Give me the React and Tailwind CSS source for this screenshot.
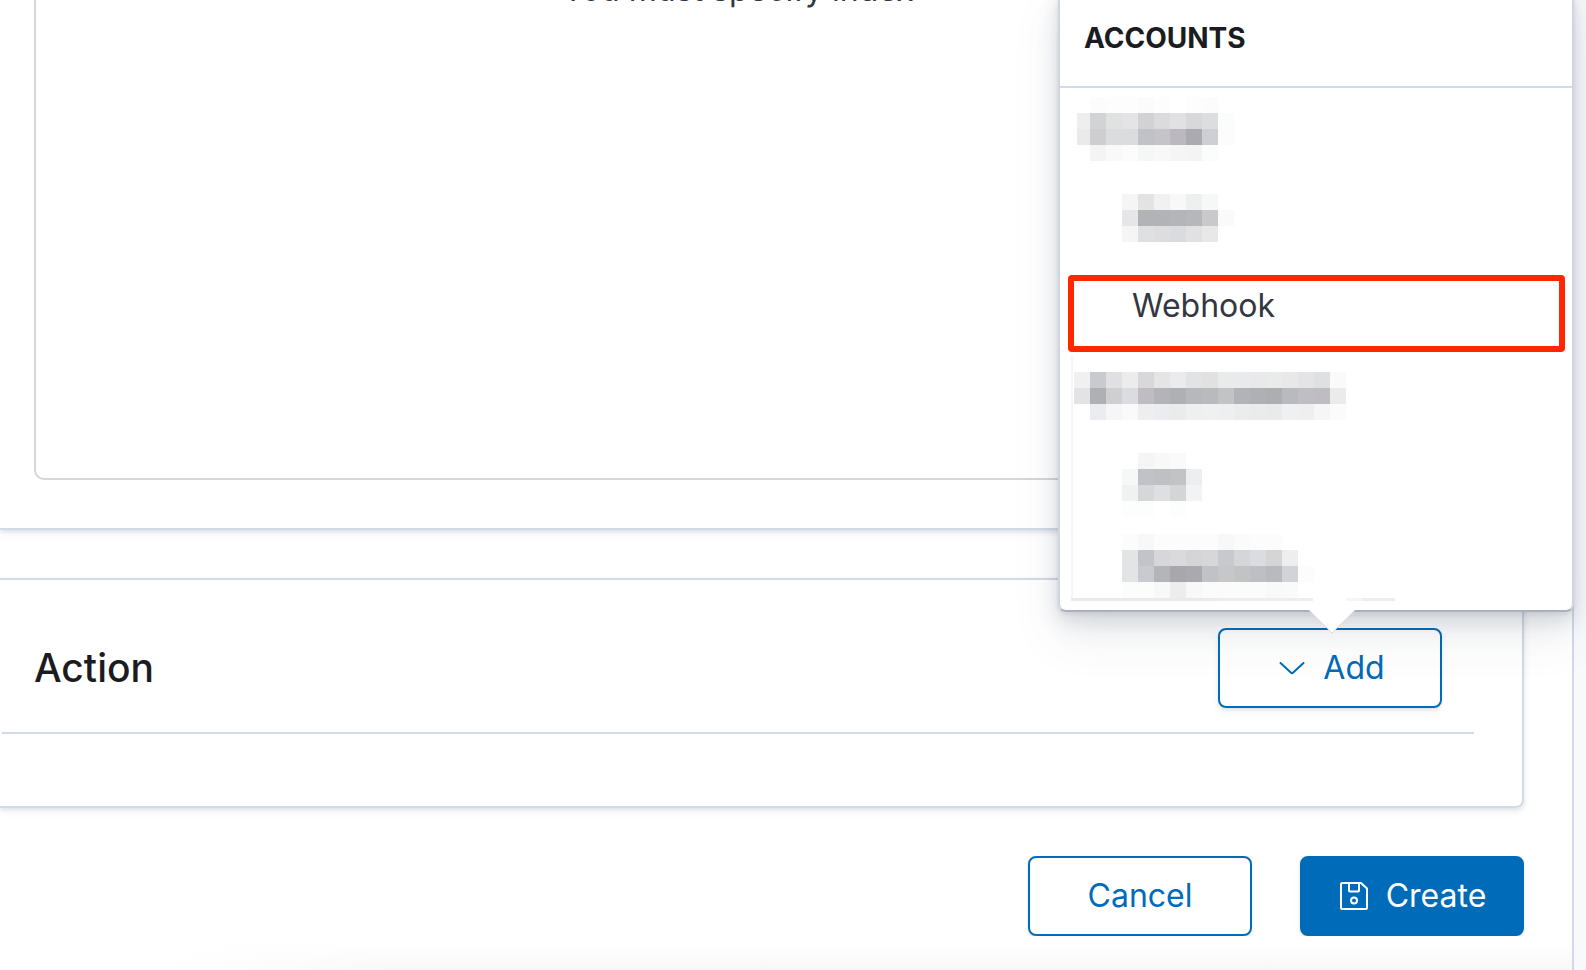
import React from "react";

const CELL = 16;

// Each block is a pixelated label: x / y of its first cell, then rows of grey tones.
const ROWS = [
  {
    id: "group-1",
    blocks: [
      {
        x: 14,
        y: 9,
        tones: [
          ["", "#fcfcfc", "#fdfdfd", "#fdfdfd", "#fbfbfb", "#fdfdfd", "", "#fdfdfd", "#fcfcfc"],
          ["#eeeeee", "#d2d3d5", "#dfe2e0", "#e4e4e7", "#d2d2d4", "#dbdbde", "#e1e1e4", "#d8d8da", "#dcdddf", "#fafdfc"],
          ["#eaeaea", "#cecdd0", "#dbdcde", "#dbdcde", "#c1c2c7", "#c4c4c9", "#bbb9bf", "#aaaab0", "#cecfd4", "#fcfcfc"],
          ["", "#f4f4f4", "#f9f9f9", "#fcfcfc", "#f5f7f7", "#f8f8f8", "#f5f5f5", "#f4f4f4", "#fafdfc"],
        ],
      },
    ],
  },
  {
    id: "item-1",
    blocks: [
      {
        x: 62,
        y: 19,
        tones: [
          ["#f5f5f5", "#e3e3e3", "#f1f1f1", "#f8f8f8", "#eef0f0", "#f6f7f7"],
          ["#e6e6e9", "#b2b3b7", "#b2b3b7", "#b4b5b9", "#b6b7ba", "#c9c9cb", "#fafafa"],
          ["#f5f5f5", "#dee0e2", "#dddddf", "#dadbde", "#e1e1e4", "#e8e8e8"],
        ],
      },
    ],
  },
  { id: "webhook", label: "Webhook" },
  {
    id: "group-2",
    edge: true,
    blocks: [
      {
        x: 14,
        y: 23,
        tones: [
          ["#f0f0f0", "#c9cacf", "#e0e0e3", "#ececec", "#d8d8da", "#e5e5e5", "#ebebed", "#e1e3e5", "#e1e1e1", "#e9ebea", "#e9eaec", "#e9e9eb", "#e9eaea", "#e8e8e8", "#e4e4e7", "#dee0e2", "#fafafa"],
          ["#e1e3e5", "#afb0b4", "#cfcfd1", "#dbdce1", "#bfbdc3", "#b3b4b9", "#afb0b4", "#b7b8bc", "#b9babe", "#c2c3c4", "#b2b3b9", "#afb0b5", "#adaeb2", "#b9bac0", "#c0bec5", "#bfbdc3", "#ebebeb"],
          ["", "#ebecef", "#f6f6f6", "#fafafa", "#eeeeee", "#ebecef", "#ebebeb", "#efefef", "#f0f0f0", "#eef0ef", "#ececec", "#ebebeb", "#eaeaea", "#f0f0f3", "#efefef", "#f6f6f6", "#fbfbfb"],
        ],
      },
    ],
  },
  {
    id: "item-2",
    edge: true,
    blocks: [
      {
        x: 62,
        y: 17,
        tones: [
          ["", "#f5f5f5", "#f8f8f8", "#fafafa"],
          ["#f6f7f7", "#c1c2c7", "#bfc0c4", "#c2c3c4", "#edeef0"],
          ["#eff2f1", "#d6d7d9", "#dfdfe2", "#d4d5d7", "#f3f3f3"],
          ["#fdfdfd", "#fdfdfd", "", "#fdfdfd"],
        ],
      },
    ],
  },
  {
    id: "item-3",
    edge: true,
    foot: true,
    blocks: [
      {
        x: 62,
        y: 11,
        tones: [
          ["#fcfcfc", "#f8f8f8", "#fcfcfc", "#fcfcfc", "#fcfcfc", "#fcfcfc", "#f8f8f8", "#fbfbfb", "#fcfcfc", "#fcfcfc"],
          ["#e2e4e6", "#c3c4c9", "#d7d7d9", "#dadadc", "#d5d5d7", "#d7d7d9", "#c8c9ce", "#d5d6d8", "#dbdce1", "#d5d5d6", "#eeeeee"],
          ["#e2e4e6", "#c9cacf", "#b4b5b9", "#a7a7ac", "#a9a9af", "#c1c2c7", "#c7c7ca", "#c2c3c5", "#bebfc4", "#b9babf", "#d2d3d8", "#fcfcfc"],
          ["#fcfcfc", "#fcfcfb", "#f8f8f8", "#ededed", "#f8f8f8", "#fbfbfb", "#fbfbfb", "#fbfbfb", "#fbfbfb", "#f9f9f9", "#fafafa"],
        ],
      },
    ],
  },
];

function Mosaic({ row }) {
  return (
    <svg className="block h-full w-full" aria-hidden="true" shapeRendering="crispEdges">
      {row.edge && <rect x="11" y={row.id === "group-2" ? 6 : 0} width="2" height={row.foot ? 78 : 87} fill="#f6f6f8" />}
      {row.blocks.map((block) =>
        block.tones.map((tones, r) =>
          tones.map((tone, c) =>
            tone ? (
              <rect
                key={`${r}-${c}`}
                x={block.x + c * CELL}
                y={block.y + r * CELL}
                width={CELL}
                height={CELL}
                fill={tone}
              />
            ) : null
          )
        )
      )}
      {row.id === "group-1" && <rect x="14" y="9" width="3" height="64" fill="#fff" />}
      {row.foot && (
        <>
          <rect x="11" y="75" width="147" height="3" fill="#e9e9ef" />
          <rect x="158" y="75" width="95" height="3" fill="#ededee" />
          <rect x="286" y="75" width="16" height="3" fill="#f5f5f5" />
          <rect x="302" y="75" width="33" height="3" fill="#ededed" />
        </>
      )}
    </svg>
  );
}

function AccountsMenu() {
  return (
    <div className="absolute -right-[132px] bottom-[96px] z-10 w-[516px] rounded-lg border-2 border-[#d0d6e0] border-b-[#a9b0bf] bg-white shadow-[0_2px_4px_rgba(65,78,101,0.1),0_8px_16px_rgba(65,78,101,0.1),0_12px_24px_rgba(65,78,101,0.08),0_24px_48px_rgba(65,78,101,0.1)]">
      <h3 className="border-b-2 border-[#d0dae8] p-6 text-[28px] leading-[48px] font-bold text-[#1a1c21] uppercase">
        Accounts
      </h3>
      <ul>
        {ROWS.map((row) => (
          <li key={row.id} className="relative">
            <button type="button" aria-label={row.label || row.id} className="block h-[87px] w-full text-left">
              {row.label ? <span className="pl-[72px] text-[32px] leading-10 text-[#343741]">{row.label}</span> : <Mosaic row={row} />}
            </button>
            {row.label && (
              <span className="pointer-events-none absolute top-[13px] right-[7px] left-2 h-[77px] rounded border-6 border-[#ff2600]" />
            )}
          </li>
        ))}
      </ul>
      <svg className="absolute top-full left-[249px]" width="46" height="24" viewBox="0 0 46 24" aria-hidden="true">
        <path d="M0 0L23 23L46 0Z" fill="#fff" />
        <path d="M1 1.5L23 23L45 1.5" fill="none" stroke="#d3dae6" strokeWidth="1" />
      </svg>
    </div>
  );
}

const buttonBase =
  "flex h-20 w-56 items-center justify-center rounded-lg border-2 border-[#006bb8] text-[32px] leading-10 shadow-[0_2px_3px_rgba(0,0,0,0.07),0_4px_8px_rgba(0,0,0,0.05)]";

export default function App() {
  return (
    <div className="flex min-h-screen overflow-hidden bg-[#f8f9fc] pr-3 font-['Inter',sans-serif] text-[#343741]">
      <main className="flex min-w-0 flex-1 flex-col border-r-2 border-[#d0dae8] bg-white">
        <section className="mr-12 border-r-2 border-b-2 border-[#d0dae8] pr-20 pb-12 pl-[34px] shadow-[0_2px_4px_rgba(65,78,101,0.12),0_4px_8px_rgba(65,78,101,0.06)]">
          <div className="flow-root h-[480px] rounded-b-[10px] border-2 border-t-0 border-[#d6d6d6]">
            <p className="-mt-[34px] text-center text-[32px] leading-[48px]">You must specify index</p>
          </div>
        </section>

        <section className="mt-12 mr-12 rounded-r-lg border-y-2 border-r-2 border-[#d0dae8] pt-12 pr-12 pb-[72px] pl-[2px] shadow-[0_2px_4px_rgba(65,78,101,0.12),0_4px_8px_rgba(65,78,101,0.06)]">
          <div className="flex items-center justify-between border-b-2 border-[#d0dae8] pr-8 pb-6 pl-8">
            <h2 className="text-[39px] leading-[48px] font-medium text-[#1a1c21]">Action</h2>
            <div className="relative">
              <button type="button" className={`${buttonBase} gap-4 text-[#006bb8]`}>
                <svg width="32" height="32" viewBox="0 0 32 32" fill="none" aria-hidden="true">
                  <path d="M5.5 11L15.8 20.6Q17 21.7 18.2 20.6L28.5 11" stroke="currentColor" strokeWidth="2" strokeLinecap="round" />
                </svg>
                Add
              </button>
              <AccountsMenu />
            </div>
          </div>
        </section>

        <div className="mt-12 mr-12 flex justify-end gap-12">
          <button type="button" className={`${buttonBase} text-[#006bb8]`}>
            Cancel
          </button>
          <button type="button" className={`${buttonBase} gap-4 bg-[#006bb8] text-white`}>
            <svg width="32" height="32" viewBox="0 0 32 32" fill="none" stroke="currentColor" strokeWidth="2" aria-hidden="true">
              <path d="M4 3H23L29 8.5V28Q29 29 28 29H4Q3 29 3 28V4Q3 3 4 3Z" strokeLinejoin="round" />
              <path d="M11 3V10.5Q11 11.5 12 11.5H20Q21 11.5 21 10.5V3" />
              <circle cx="16" cy="20.5" r="3" />
            </svg>
            Create
          </button>
        </div>
        <div className="flex-1 bg-[linear-gradient(to_right,#fff_160px,transparent_400px),linear-gradient(to_bottom,#fff_20%,#f8f8f8)]" />
      </main>
    </div>
  );
}
